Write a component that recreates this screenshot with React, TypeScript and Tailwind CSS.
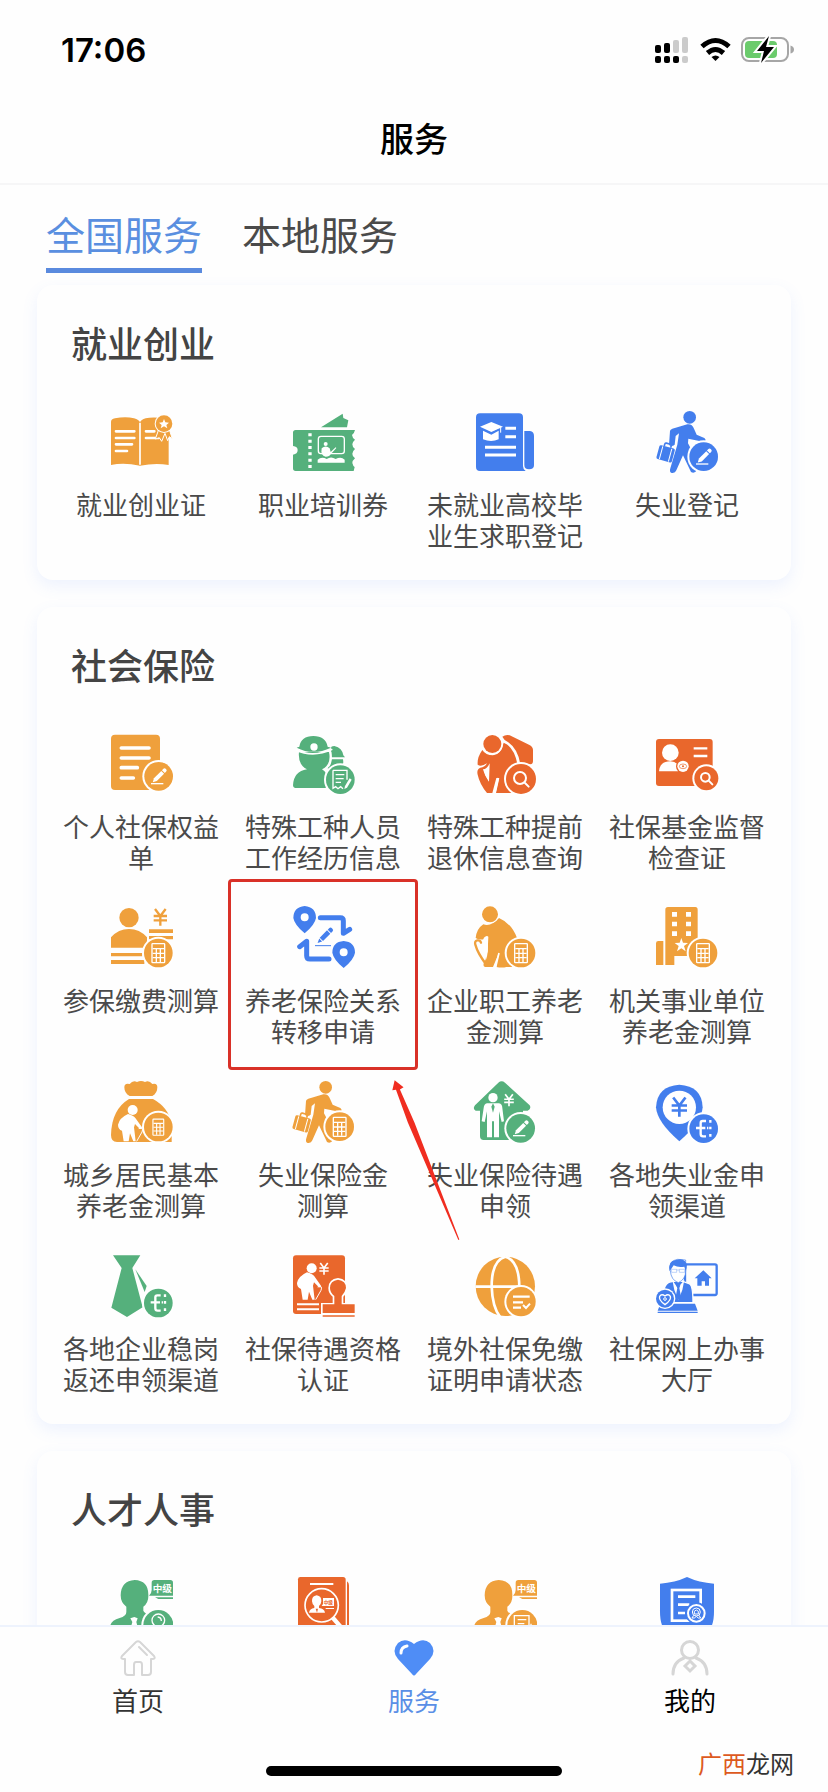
import type { ReactNode } from 'react'

interface Service {
  label: string
  icon: ReactNode
  color: string
  highlighted?: boolean
}

interface BadgeProps {
  x: number
  y: number
  r?: number
  children?: ReactNode
}

const ORANGE = 'text-[#efa03c]'
const GREEN = 'text-[#55b07c]'
const BLUE = 'text-[#437eed]'
const RED = 'text-[#e9672c]'

/* ---------- shared icon parts (192 unit grid) ---------- */

function Badge({ x, y, r = 43, children }: BadgeProps) {
  return (
    <g transform={`translate(${x} ${y})`}>
      <circle r={r + 6} fill="#fff" />
      <circle r={r} fill="currentColor" />
      {children}
    </g>
  )
}

function Pencil() {
  return (
    <g fill="#fff">
      <g transform="rotate(45)">
        <path d="M-6 -17H6V14L0 25L-6 14Z" />
        <path d="M-6 -20V-26Q-6 -31 0 -31Q6 -31 6 -26V-20Z" />
      </g>
      <path d="M-23 20H14V24H-23Z" />
    </g>
  )
}

function Calculator() {
  return (
    <g>
      <rect x="-19" y="-28" width="38" height="57" rx="2" fill="none" stroke="#fff" strokeWidth="4" />
      <path d="M-17 -13H17M-17 1H17M-17 14H17M-6 -13V27M6 -13V27" fill="none" stroke="#fff" strokeWidth="4" />
    </g>
  )
}

function Lens({ r = 17 }: { r?: number }) {
  return (
    <g fill="none" stroke="#fff" strokeWidth="6" strokeLinecap="round">
      <circle cx="-3" cy="-3" r={r} />
      <path d={`M${r - 6} ${r - 6}L${r + 5} ${r + 5}`} />
    </g>
  )
}

function EuroMark() {
  return (
    <g fill="none" stroke="#fff" strokeWidth="7">
      <path d="M7 -23H-3Q-9 -23 -9 -17V16Q-9 23 -2 23H7M-23 -2H5" />
      <path d="M20 -26V-18M20 -6V2M20 16V24M10 -2H14" />
    </g>
  )
}

function Yuan({ x, y, s = 1, color = '#fff' }: { x: number; y: number; s?: number; color?: string }) {
  return (
    <g transform={`translate(${x} ${y}) scale(${s})`} fill="none" stroke={color} strokeWidth="7">
      <path d="M-16 -24L0 -3L16 -24M0 -4V26M-20 -3H20M-20 10H20" />
    </g>
  )
}

function Walker({ children }: { children: ReactNode }) {
  return (
    <>
      <g fill="currentColor">
        <circle cx="104" cy="22" r="19" />
        <path d="M97 43Q111 41 117 56L125 74L148 84Q155 90 149 96L122 91L100 86L99 100Q115 125 126 180Q119 192 108 186L84 136L64 181Q60 191 48 188Q43 185 46 175L67 104L72 70L62 78L59 104Q50 112 42 105L45 63Q46 58 52 56Z" />
        <g transform="rotate(15 32 131)">
          <rect x="8" y="110" width="48" height="43" rx="5" />
          <path d="M22 110V104Q22 100 26 100H38Q42 100 42 104V110" fill="none" stroke="currentColor" strokeWidth="5" />
          <path d="M18 112V152M46 112V152" stroke="#fff" strokeWidth="3" />
        </g>
      </g>
      <Badge x={146} y={140}>{children}</Badge>
    </>
  )
}

function Elder({ children }: { children: ReactNode }) {
  return (
    <>
      <g fill="currentColor">
        <path d="M31 55Q54 63 78 36Q116 52 133 98L118 183H100Q88 186 70 183L76 144L60 183H36Q28 180 34 168L44 136L46 92Q38 86 34 100Q16 102 8 96Q11 68 31 55Z" />
        <circle cx="51" cy="25" r="27" fill="#fff" />
        <circle cx="51" cy="25" r="24" />
      </g>
      <path d="M44 92Q30 90 30 108Q34 138 38 164Q48 140 44 92Z" fill="#fff" />
      <path d="M78 141L68 183" stroke="#fff" strokeWidth="5" />
      <path d="M24 110Q22 102 13 103Q4 105 7 116Q14 142 40 176" fill="none" stroke="currentColor" strokeWidth="7" strokeLinecap="round" />
      <Badge x={144} y={141}>{children}</Badge>
    </>
  )
}

/* small white bent figure that sits on a coloured ground */
function MiniElder({ x, y }: { x: number; y: number }) {
  return (
    <g transform={`translate(${x} ${y})`} fill="#fff">
      <circle r="15" />
      <path d="M-14 12Q-40 24 -44 44Q-44 58 -32 62L-27 94H-12L-8 70L2 94H9L4 52L7 42L21 56Q28 60 28 52L8 24Q2 16 -14 12Z" />
      <path d="M18 56Q34 50 28 66L12 94" fill="none" stroke="#fff" strokeWidth="3" />
    </g>
  )
}

function Graduate({ children }: { children: ReactNode }) {
  return (
    <>
      <path d="M77 12Q119 14 118 58Q119 80 103 92V104Q106 112 124 118V192H4V148Q8 132 32 126Q52 120 52 108V92Q35 80 35 58Q36 14 77 12Z" fill="currentColor" />
      <path d="M64 127L76 123L86 127L82 138L88 160H64L70 138Z" fill="#fff" />
      <path d="M136 12H184Q192 12 192 20V59H120Q128 52 128 42V20Q128 12 136 12ZM138 64H192V69H148Z" fill="currentColor" />
      <text x="160" y="47" textAnchor="middle" fontSize="29" fontWeight="700" fill="#fff">中级</text>
      <Badge x={148} y={147} r={45}>{children}</Badge>
    </>
  )
}

/* ---------- service icons ---------- */

const bookIcon = (
  <>
    <path d="M6 36Q6 27 18 25Q50 19 75 25Q90 29 93 37Q96 29 110 25Q125 21 150 23L179 60V165Q140 158 93 167Q45 157 6 165Z" fill="currentColor" />
    <path d="M93 38V164" stroke="#fff" strokeWidth="5" />
    <path d="M21 64H76M21 84H76M21 103H69M21 123H54M111 64H136M111 84H150" stroke="#fff" strokeWidth="8" strokeLinecap="round" />
    <path d="M150 56L139 87L151 83L158 94L168 70L176 92L181 80L190 86L180 56Z" fill="currentColor" stroke="#fff" strokeWidth="3" />
    <circle cx="165" cy="41" r="28" fill="#fff" />
    <circle cx="165" cy="41" r="25" fill="currentColor" />
    <path d="M165 27L169 37L180 38L172 45L175 55L165 49L155 55L158 45L150 38L161 37Z" fill="#fff" />
  </>
)

const ticketIcon = (
  <>
    <path d="M14 60H192Q189 72 183 75Q184 84 192 89Q184 96 184 103Q184 112 192 117Q184 124 184 131Q184 140 192 145Q184 152 184 159Q186 168 191 171L188 183H14Q6 183 6 175V134Q20 132 20 120Q20 110 6 108V68Q6 60 14 60Z" fill="currentColor" />
    <path d="M57 70V183" stroke="#fff" strokeWidth="10" strokeDasharray="9 10" />
    <path d="M90 52L155 11L157 24L172 31L168 52Z" fill="currentColor" />
    <rect x="82" y="79" width="78" height="52" rx="8" fill="none" stroke="#fff" strokeWidth="4" />
    <circle cx="104" cy="102" r="6" fill="#fff" />
    <path d="M92 115Q104 104 116 115L119 126L134 112L136 114L119 133Q116 140 104 140Q88 138 92 115Z" fill="#fff" />
    <path d="M80 158V149Q92 138 107 147Q120 138 134 147Q150 138 161 149V158Z" fill="#fff" />
  </>
)

const resumeIcon = (
  <>
    <path d="M154 63H171Q183 65 183 78V165Q183 178 168 178Q154 178 154 165Z" fill="currentColor" />
    <path d="M21 10H138Q150 10 150 22V168Q150 178 158 183H21Q9 183 9 171V22Q9 10 21 10Z" fill="currentColor" />
    <path d="M21 50L55 36L90 50L55 66ZM30 62L55 74L77 62V88Q55 98 30 88Z" fill="#fff" />
    <path d="M28 58L55 69L79 58" fill="none" stroke="currentColor" strokeWidth="2" />
    <path d="M83 52V68" stroke="#fff" strokeWidth="3" />
    <path d="M97 55H129M97 80H129M36 112H129M36 135H129" stroke="#fff" strokeWidth="9" />
  </>
)

const rightsIcon = (
  <>
    <rect x="6" y="8" width="147" height="166" rx="12" fill="currentColor" />
    <path d="M37 48H120M37 78H120M37 107H85M37 138H73" stroke="#fff" strokeWidth="11" strokeLinecap="round" />
    <Badge x={149} y={133}><Pencil /></Badge>
  </>
)

const workersIcon = (
  <>
    <path d="M120 52Q118 42 130 42Q154 48 157 70L162 76L122 76ZM122 82H156Q160 104 144 110H110Z" fill="currentColor" />
    <path d="M24 60H114Q122 98 93 112Q108 122 112 140L104 168H12Q6 168 6 160Q8 118 48 112Q20 98 24 60Z" fill="currentColor" />
    <path d="M14 54Q66 78 124 52" fill="none" stroke="#fff" strokeWidth="5" />
    <path d="M25 44Q30 12 67 12Q104 12 110 44L120 47Q66 72 17 47Z" fill="currentColor" />
    <circle cx="69" cy="45" r="11" fill="#fff" />
    <path d="M119 60Q124 92 112 104" fill="none" stroke="#fff" strokeWidth="4" />
    <Badge x={148} y={143}>
      <path d="M-22 -28H20V0M-22 -28V26L-14 21L-7 27L1 21L8 27M-14 -15H12M-14 -3H10M-14 8H2" fill="none" stroke="#fff" strokeWidth="4" />
      <path d="M28 -4L34 0L20 24L12 28L14 19Z" fill="#fff" />
    </Badge>
  </>
)

const retireIcon = (
  <>
    <path d="M88 14Q98 7 110 10L168 38Q180 44 180 54V88Q180 97 170 97H142Q134 44 95 24Z" fill="currentColor" />
    <path d="M28 54Q38 70 60 70Q84 68 92 32Q124 44 134 100L120 183H68L78 138H70L58 183H42Q20 156 14 128Q10 112 22 107Q36 106 42 94Q24 106 14 98Q12 76 28 54Z" fill="currentColor" />
    <path d="M30 112Q42 112 50 94L48 150Q34 132 30 112Z" fill="#fff" />
    <path d="M27 119Q42 148 52 164" fill="none" stroke="currentColor" strokeWidth="6" />
    <path d="M76 138L66 183" stroke="#fff" strokeWidth="6" />
    <circle cx="58" cy="36" r="32" fill="#fff" />
    <circle cx="58" cy="36" r="27" fill="currentColor" />
    <Badge x={144} y={141} r={45}><Lens r={18} /></Badge>
  </>
)

const superviseIcon = (
  <>
    <rect x="3" y="21" width="170" height="141" rx="9" fill="currentColor" />
    <circle cx="46" cy="62" r="25" fill="#fff" />
    <path d="M12 118Q14 88 46 88Q62 88 70 100V118Z" fill="#fff" />
    <circle cx="84" cy="103" r="21" fill="currentColor" />
    <circle cx="84" cy="103" r="17" fill="#fff" />
    <ellipse cx="84" cy="103" rx="11" ry="7" fill="none" stroke="currentColor" strokeWidth="2" />
    <circle cx="84" cy="103" r="3" fill="currentColor" />
    <path d="M116 49H157M116 72H157" stroke="#fff" strokeWidth="7" />
    <Badge x={154} y={139} r={36}><Lens r={13} /></Badge>
  </>
)

const paymentIcon = (
  <>
    <circle cx="60" cy="35" r="29" fill="currentColor" />
    <path d="M6 125V94Q28 69 60 69Q92 69 114 94V125ZM6 141H100V151H6ZM6 162H106V174H6Z" fill="currentColor" />
    <path d="M120 70H192V81H120ZM120 90H192V100H120Z" fill="currentColor" />
    <Yuan x={154} y={33} color="currentColor" />
    <Badge x={148} y={141}><Calculator /></Badge>
  </>
)

const transferIcon = (
  <>
    <path
      fillRule="evenodd"
      d="M41 0Q75 3 75 36Q72 56 41 82Q10 56 7 36Q7 3 41 0ZM41 22A12 12 0 1 0 41 46A12 12 0 1 0 41 22Z"
      fill="currentColor"
    />
    <path
      fillRule="evenodd"
      d="M158 105Q192 108 192 140Q189 160 158 186Q127 160 124 140Q124 108 158 105ZM158 127A12 12 0 1 0 158 151A12 12 0 1 0 158 127Z"
      fill="currentColor"
    />
    <g fill="none" stroke="currentColor" strokeWidth="15" strokeLinecap="round" strokeLinejoin="round">
      <path d="M88 35H148Q157 35 157 44V82L176 70" />
      <path d="M114 159H57Q47 159 47 149V106L26 122" />
    </g>
    <g transform="translate(101 90) rotate(45)" fill="currentColor">
      <path d="M-7 -17H7V14H-7ZM-6 17H6L0 30ZM-7 -20V-27Q-7 -32 0 -32Q7 -32 7 -27V-20Z" />
    </g>
    <path d="M72 119H120" stroke="currentColor" strokeWidth="3" />
  </>
)

const buildingIcon = (
  <>
    <path d="M10 105H25V177H3V112Q3 105 10 105ZM39 3H121Q128 3 128 11V150H58V177H31V11Q31 3 39 3Z" fill="currentColor" />
    <path d="M51 18H66V32H51ZM93 18H108V32H93ZM51 47H66V61H51ZM93 47H108V61H93ZM51 76H66V90H51ZM93 76H108V90H93Z" fill="#fff" />
    <path d="M79 96L84 110L99 111L87 120L92 136L79 127L66 136L71 120L59 111L74 110Z" fill="#fff" />
    <Badge x={144} y={141}><Calculator /></Badge>
  </>
)

const bagIcon = (
  <>
    <path d="M62 48Q46 40 46 22Q46 8 62 12Q72 0 84 6Q96 0 108 6Q120 0 130 12Q145 8 145 22Q145 40 130 48Z" fill="currentColor" />
    <path d="M60 57H132Q178 82 188 130V186H24Q6 186 6 165Q8 88 60 57Z" fill="currentColor" />
    <MiniElder x={71} y={90} />
    <Badge x={148} y={141}><g transform="scale(.85)"><Calculator /></g></Badge>
  </>
)

const claimIcon = (
  <>
    <path d="M76 8Q86 0 96 8L170 76Q176 86 164 92H150V180H32Q21 180 21 168V92H8Q-2 86 6 76Z" fill="currentColor" />
    <circle cx="60" cy="53" r="14" fill="#fff" />
    <path d="M42 70H78Q88 72 88 84L93 124L86 126L78 94V172H63V124H57V172H42V94L35 126L26 124L32 84Q33 72 42 70Z" fill="#fff" />
    <path d="M60 70L65 80L60 98L55 80Z" fill="currentColor" />
    <Yuan x={108} y={60} s={0.72} />
    <Badge x={143} y={145}><Pencil /></Badge>
  </>
)

const channelIcon = (
  <>
    <path d="M73 14Q141 18 143 82Q140 126 73 184Q6 126 3 82Q6 18 73 14Z" fill="currentColor" />
    <circle cx="73" cy="82" r="50" fill="#fff" />
    <Yuan x={73} y={80} s={1.15} color="currentColor" />
    <Badge x={146} y={146}><EuroMark /></Badge>
  </>
)

const tieIcon = (
  <>
    <path d="M12 4H94L70 42L101 160L54 189L7 161L38 42Z" fill="currentColor" />
    <path d="M79 46L113 96L107 114Z" fill="currentColor" />
    <Badge x={148} y={147}><EuroMark /></Badge>
  </>
)

const stampIcon = (
  <>
    <rect x="6" y="4" width="156" height="176" rx="9" fill="currentColor" />
    <MiniElder x={62} y={43} />
    <Yuan x={99} y={44} s={0.7} />
    <path d="M18 151H84M18 166H84" stroke="#fff" strokeWidth="6" />
    <path d="M141 72Q170 76 170 102Q167 120 157 128V147H192V184H90V147H125V128Q112 118 112 102Q112 76 141 72Z" fill="#fff" />
    <path d="M141 77Q165 80 165 102Q162 116 152 126V151H191V177H95V151H130V126Q117 116 117 102Q117 80 141 77ZM95 184H191V188H95Z" fill="currentColor" />
  </>
)

const globeIcon = (
  <>
    <circle cx="97" cy="97" r="89" fill="currentColor" />
    <path d="M97 8Q56 20 56 97Q58 160 82 190M97 8Q138 20 139 98M7 98H139" fill="none" stroke="#fff" strokeWidth="8" />
    <Badge x={144} y={143} r={44}>
      <path d="M-24 -15H26M-24 2H6M-24 18H0" stroke="#fff" strokeWidth="7" />
      <path d="M6 10L15 19L27 6" fill="none" stroke="#fff" strokeWidth="6" />
    </Badge>
  </>
)

const onlineHallIcon = (
  <>
    <rect x="90" y="31" width="95" height="92" rx="5" fill="none" stroke="currentColor" strokeWidth="7" />
    <path d="M145 49L170 73H162V95H150V82H140V95H127V73H119Z" fill="currentColor" />
    <path d="M24 140Q22 92 44 84L55 82H84L104 90Q114 96 114 146H24Z" fill="currentColor" stroke="#fff" strokeWidth="4" />
    <path d="M52 78L68 102L88 78L82 108L70 138L58 108Z" fill="#fff" />
    <path d="M64 94H76L73 102L78 128L70 138L62 128L67 102Z" fill="currentColor" />
    <path d="M44 44Q44 20 68 16L92 18V50Q92 76 70 86Q48 78 46 50Z" fill="#fff" stroke="currentColor" strokeWidth="2" />
    <path d="M44 52Q38 20 62 18Q82 12 90 22Q100 30 92 52L88 38Q70 42 56 34Z" fill="currentColor" />
    <path d="M49 46H65V55H50ZM73 46H89V55H73ZM65 48H73" fill="none" stroke="currentColor" strokeWidth="1" />
    <path d="M16 149H120L128 170H8ZM8 173H128V177H8Z" fill="currentColor" />
    <circle cx="30" cy="134" r="31" fill="#fff" />
    <circle cx="30" cy="134" r="27" fill="currentColor" />
    <path d="M30 152Q10 138 14 127Q20 118 30 126Q40 118 46 127Q50 138 30 152Z" fill="none" stroke="#fff" strokeWidth="4" />
    <circle cx="30" cy="135" r="4" fill="none" stroke="#fff" strokeWidth="3" />
  </>
)

const titleLookupIcon = (
  <>
    <path d="M168 16Q174 20 174 28V192H168Z" fill="currentColor" />
    <path d="M28 3H156Q164 3 164 11V192H21V10Q21 3 28 3Z" fill="currentColor" />
    <path d="M57 24H127" stroke="#fff" strokeWidth="6" />
    <circle cx="92" cy="88" r="50" fill="none" stroke="#fff" strokeWidth="5" />
    <path d="M77 58Q92 60 91 76Q90 86 84 90V96Q100 98 102 110H54Q56 98 70 96V90Q64 86 63 76Q62 60 77 58Z" fill="#fff" />
    <path d="M74 98H81L78 110Z" fill="currentColor" />
    <path d="M96 66H129V90H92L96 84ZM104 96H129V99H104Z" fill="#fff" />
    <text x="112" y="83" textAnchor="middle" fontSize="14" fontWeight="700" fill="currentColor">中级</text>
    <path d="M126 126L152 156" stroke="#fff" strokeWidth="13" />
  </>
)

const shieldIcon = (
  <>
    <path d="M96 3Q132 20 177 23V100Q178 150 158 168Q128 192 96 192Q64 192 34 168Q14 150 15 100V23Q60 20 96 3Z" fill="currentColor" />
    <rect x="51" y="42" width="86" height="92" fill="none" stroke="#fff" strokeWidth="8" />
    <path d="M69 62H121M69 86H103M69 111H90" stroke="#fff" strokeWidth="8" />
    <circle cx="124" cy="112" r="33" fill="currentColor" />
    <circle cx="124" cy="112" r="25" fill="currentColor" stroke="#fff" strokeWidth="6" />
    <circle cx="124" cy="108" r="12" fill="none" stroke="#fff" strokeWidth="3" />
    <path d="M124 102L130 106V114H118V106ZM116 118L111 126H118L124 121L130 126H137L132 118" fill="none" stroke="#fff" strokeWidth="3" />
  </>
)

/* ---------- data ---------- */

const employment: Service[] = [
  { label: '就业创业证', icon: bookIcon, color: ORANGE },
  { label: '职业培训券', icon: ticketIcon, color: GREEN },
  { label: '未就业高校毕\n业生求职登记', icon: resumeIcon, color: BLUE },
  { label: '失业登记', icon: <Walker><Pencil /></Walker>, color: BLUE },
]

const insurance: Service[] = [
  { label: '个人社保权益\n单', icon: rightsIcon, color: ORANGE },
  { label: '特殊工种人员\n工作经历信息', icon: workersIcon, color: GREEN },
  { label: '特殊工种提前\n退休信息查询', icon: retireIcon, color: RED },
  { label: '社保基金监督\n检查证', icon: superviseIcon, color: RED },
  { label: '参保缴费测算', icon: paymentIcon, color: ORANGE },
  { label: '养老保险关系\n转移申请', icon: transferIcon, color: BLUE, highlighted: true },
  { label: '企业职工养老\n金测算', icon: <Elder><Calculator /></Elder>, color: ORANGE },
  { label: '机关事业单位\n养老金测算', icon: buildingIcon, color: ORANGE },
  { label: '城乡居民基本\n养老金测算', icon: bagIcon, color: ORANGE },
  { label: '失业保险金\n测算', icon: <Walker><Calculator /></Walker>, color: ORANGE },
  { label: '失业保险待遇\n申领', icon: claimIcon, color: GREEN },
  { label: '各地失业金申\n领渠道', icon: channelIcon, color: BLUE },
  { label: '各地企业稳岗\n返还申领渠道', icon: tieIcon, color: GREEN },
  { label: '社保待遇资格\n认证', icon: stampIcon, color: RED },
  { label: '境外社保免缴\n证明申请状态', icon: globeIcon, color: ORANGE },
  { label: '社保网上办事\n大厅', icon: onlineHallIcon, color: BLUE },
]

const talent: Service[] = [
  {
    label: '',
    icon: (
      <Graduate>
        <circle cy="-14" r="19" fill="none" stroke="#fff" strokeWidth="4" />
        <path d="M-2 -24Q9 -23 9 -12" fill="none" stroke="#fff" strokeWidth="4" />
      </Graduate>
    ),
    color: GREEN,
  },
  { label: '', icon: titleLookupIcon, color: RED },
  {
    label: '',
    icon: (
      <Graduate>
        <path d="M-24 10V-28H20V10M-14 -16H12M-14 -4H6M26 -4V10" fill="none" stroke="#fff" strokeWidth="4" />
      </Graduate>
    ),
    color: ORANGE,
  },
  { label: '', icon: shieldIcon, color: BLUE },
]

/* ---------- layout ---------- */

function StatusBar() {
  return (
    <div className="flex h-[96px] items-center justify-between pr-[34px] pl-[61px] pt-1">
      <time className="font-[Inter,sans-serif] text-[33px] leading-[40px] font-semibold">17:06</time>
      <svg viewBox="0 0 140 28" className="h-7 w-[140px]" aria-hidden="true">
        <g fill="#000">
          <rect x="1" y="9" width="6" height="8" rx="2" />
          <rect x="10" y="7" width="6" height="10" rx="2" />
          <rect x="1" y="20" width="6" height="7" rx="2" />
          <rect x="10" y="20" width="6" height="7" rx="2" />
          <rect x="19" y="20" width="6" height="7" rx="2" />
        </g>
        <g fill="#cbcbcb">
          <rect x="19" y="4" width="6" height="13" rx="2" />
          <rect x="28" y="1" width="6" height="16" rx="2" />
          <rect x="28" y="20" width="6" height="7" rx="2" />
        </g>
        <g fill="none" stroke="#000" strokeWidth="5">
          <path d="M48 10.500Q61.500 -1.500 75 10.500" />
          <path d="M53.500 17Q61.500 10 69.500 17" />
        </g>
        <path d="M57.500 21Q61.500 18 65.500 21L61.500 25Z" fill="#000" />
        <rect x="88" y="2" width="46" height="23" rx="7" fill="none" stroke="#a6a6a6" strokeWidth="2" />
        <rect x="91" y="5" width="32" height="17" rx="4" fill="#6bcb6c" />
        <path d="M136.500 9.500Q140 10.500 140 13.500Q140 16.500 136.500 17.500Z" fill="#a6a6a6" />
        <path d="M115 0L103 15H110L107 27L120 11H112Z" fill="#000" stroke="#fff" strokeWidth="4" paintOrder="stroke" />
      </svg>
    </div>
  )
}

/* red frame and pointer drawn over the highlighted service */
function Highlight() {
  return (
    <>
      <span className="pointer-events-none absolute -inset-x-1 -top-[27px] -bottom-6 rounded-[4px] border-[3px] border-[#d93128]" />
      <svg viewBox="1080 90 206 490" className="pointer-events-none absolute top-[173px] left-[160px] z-10 h-[163px] w-[68px]" aria-hidden="true">
        <path d="M1088 92L1115 113L1104 120L1148 220L1284 574L1281 576L1128 220L1092 121L1081 122Z" fill="#f02d20" />
      </svg>
    </>
  )
}

function ServiceItem({ service }: { service: Service }) {
  return (
    <a href="#" className="relative flex min-h-[140px] flex-col items-center gap-[14px]">
      <svg viewBox="0 0 192 192" className={`size-16 ${service.color}`} aria-hidden="true">
        {service.icon}
      </svg>
      <span className="text-center text-[26px] leading-[31px] whitespace-pre text-[#4a4a4a]">{service.label}</span>
      {service.highlighted && <Highlight />}
    </a>
  )
}

function ServiceCard({ title, services }: { title: string; services: Service[] }) {
  return (
    <section className="rounded-[16px] bg-[#fefefe] px-[13px] pt-[33px] pb-[30px] shadow-[0_6px_16px_rgba(90,140,255,0.1)]">
      <h2 className="mb-[44px] px-[21px] text-[36px] leading-[48px] font-medium text-[#444]">{title}</h2>
      <div className="grid grid-cols-4 gap-y-[34px]">
        {services.map((service, index) => (
          <ServiceItem key={index} service={service} />
        ))}
      </div>
    </section>
  )
}

function BottomNav() {
  return (
    <nav className="relative grid h-[167px] shrink-0 grid-cols-3 items-start border-t-2 border-[#eef3fd] bg-[#fefefe] pt-[13px] text-[26px] leading-[32px]">
      <a href="#" className="flex flex-col items-center gap-2 text-[#333]">
        <svg viewBox="0 0 36 36" className="size-9" fill="none" stroke="#d6d6d6" strokeWidth="2" strokeLinejoin="round" strokeLinecap="round" aria-hidden="true">
          <path d="M16 2Q18 0.500 20 2L34 16Q36 19 32 19H31V32Q31 35 28 35H22V25Q22 22 20 22H16Q14 22 14 25V35H8Q5 35 5 32V19H4Q0 19 2 16Z" />
          <path d="M19 7L27 15" />
        </svg>
        首页
      </a>
      <a href="#" aria-current="page" className="flex flex-col items-center gap-2 text-[#5a8fe6]">
        <svg viewBox="0 0 40 36" className="h-9 w-10" aria-hidden="true">
          <path d="M20 4Q29 -3 36 3Q43 11 36 19L22 34Q20 37 18 34L4 19Q-3 11 4 3Q11 -3 20 4Z" fill="#4f8df6" />
          <path d="M7 13Q7 7 13 6" fill="none" stroke="#fff" strokeWidth="3" strokeLinecap="round" />
        </svg>
        服务
      </a>
      <a href="#" className="flex flex-col items-center gap-2 text-black">
        <svg viewBox="0 0 38 36" className="h-9 w-[38px]" fill="none" stroke="#d6d6d6" strokeWidth="3" strokeLinecap="round" aria-hidden="true">
          <circle cx="19" cy="10" r="8.500" />
          <path d="M2 34Q2 22 13 18M36 34Q36 22 25 18" />
          <path d="M19 21L24 26L19 31L14 26Z" />
        </svg>
        我的
      </a>
      <span className="absolute bottom-4 left-1/2 h-[10px] w-[296px] -translate-x-1/2 rounded-full bg-black" />
      <span className="absolute right-[34px] bottom-[13px] text-[24px] leading-[32px] text-[#333]">
        <span className="text-[#dd5a1e]">广西</span>龙网
      </span>
    </nav>
  )
}

export default function App() {
  return (
    <div className="flex h-screen flex-col overflow-hidden bg-[#fefefe] font-['Noto_Sans_CJK_SC',sans-serif] text-black">
      <header className="shrink-0 border-b-2 border-[#f6f6f7]">
        <StatusBar />
        <h1 className="pt-[18px] pb-[21px] text-center text-[34px] leading-[48px] font-medium">服务</h1>
      </header>

      <div role="tablist" className="flex shrink-0 gap-10 px-[46px] pt-[23px] text-[39px] leading-[50px]">
        <button role="tab" aria-selected="true" className="border-b-[5px] border-[#5a8ade] pb-[10px] text-[#5a8fe0]">全国服务</button>
        <button role="tab" aria-selected="false" className="border-b-[5px] border-transparent pb-[10px] text-[#4a4a4a]">本地服务</button>
      </div>

      <main className="flex min-h-0 flex-1 flex-col gap-[27px] overflow-hidden px-[37px] pt-3">
        <ServiceCard title="就业创业" services={employment} />
        <ServiceCard title="社会保险" services={insurance} />
        <ServiceCard title="人才人事" services={talent} />
      </main>

      <BottomNav />
    </div>
  )
}
